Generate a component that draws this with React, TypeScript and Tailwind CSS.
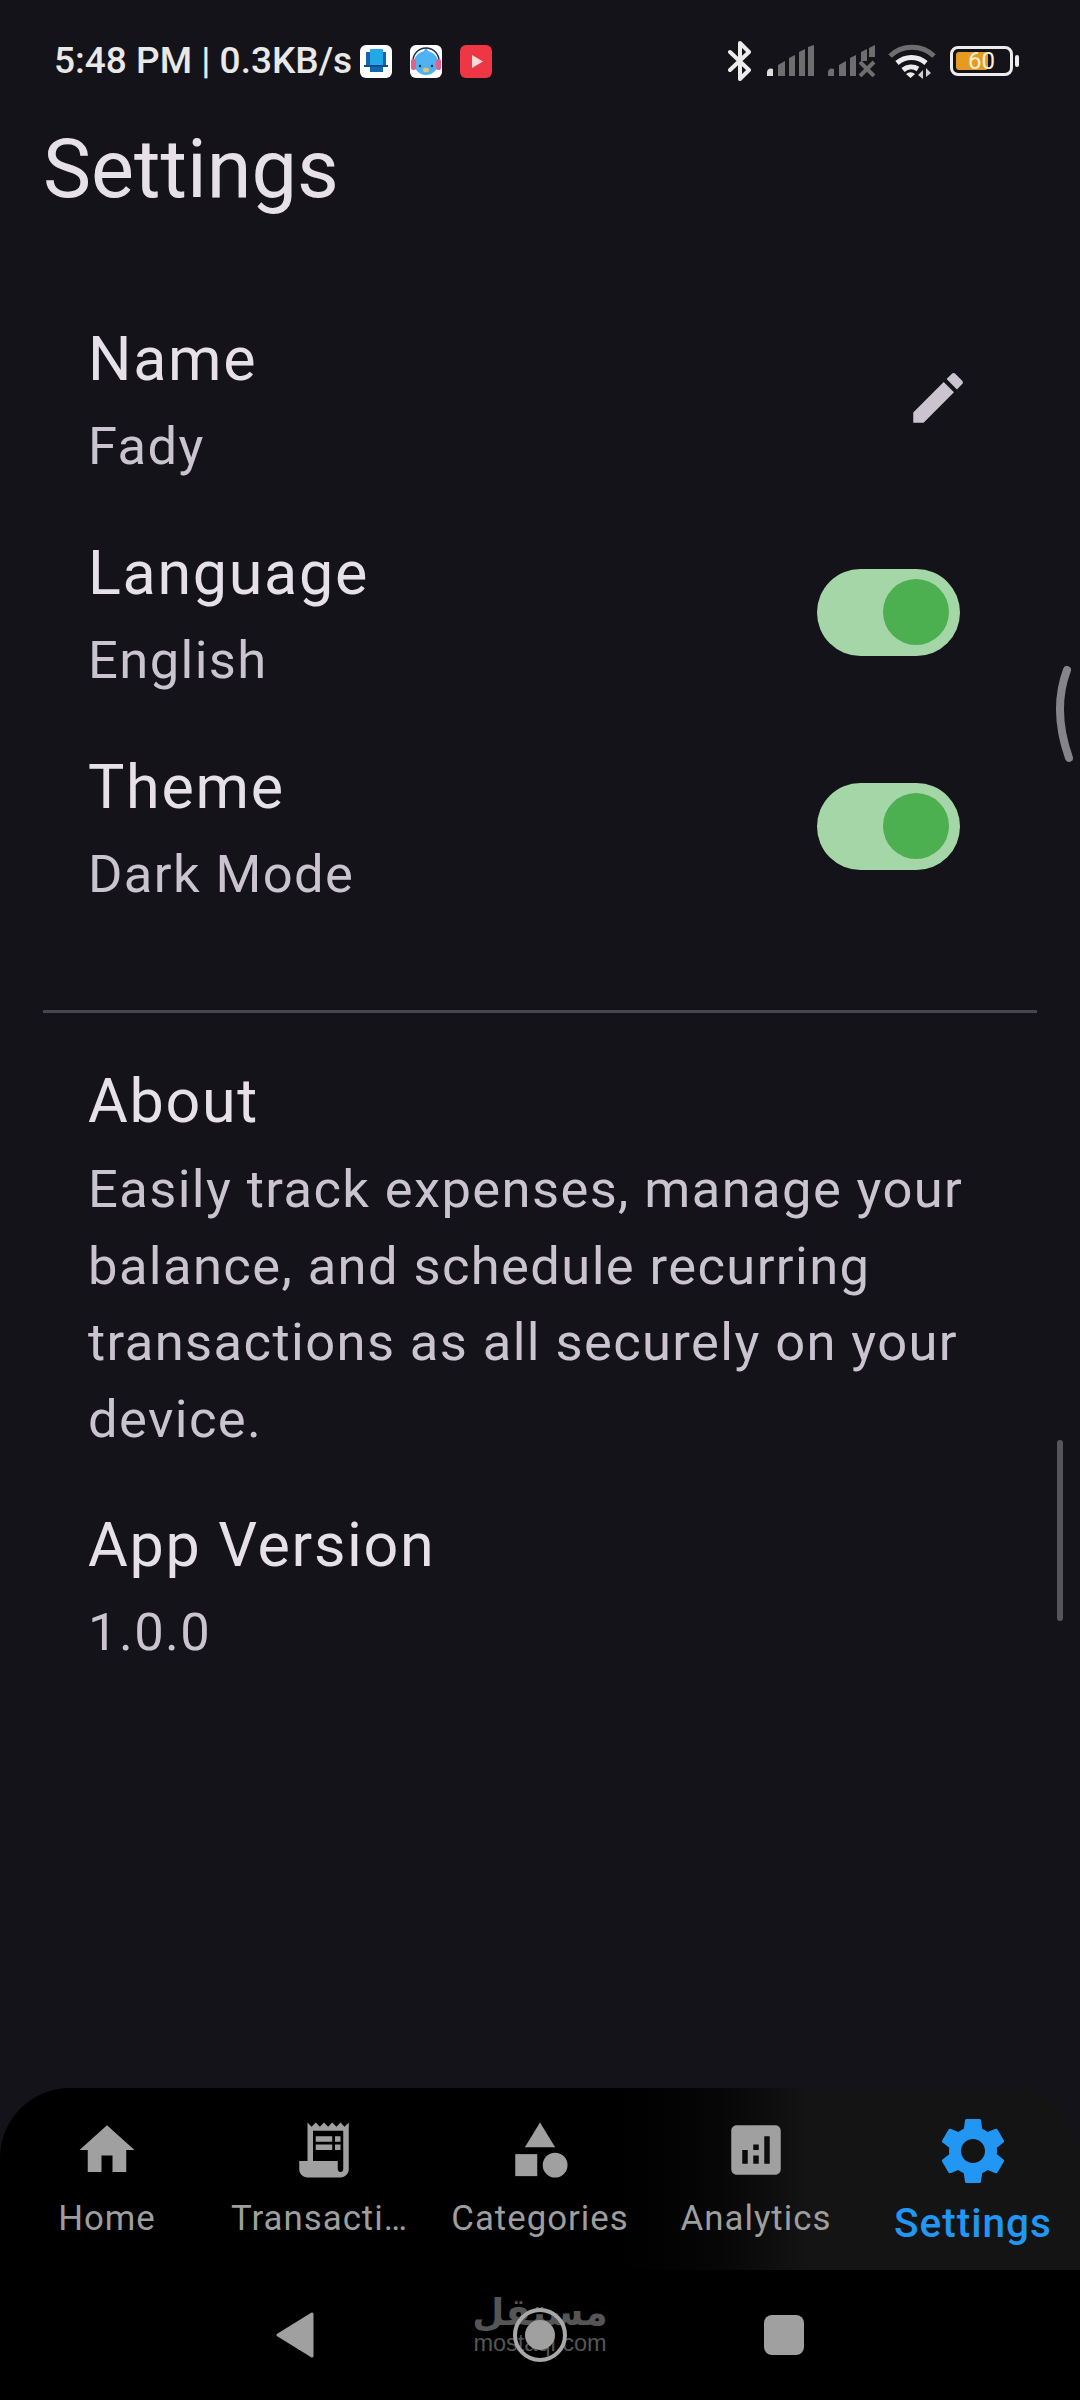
import { MdAnalytics, MdCategory, MdEdit, MdHome, MdReceiptLong, MdSettings } from "react-icons/md";

const roboto = "font-['Roboto',sans-serif]";

function AppIcons() {
  return (
    <div className="flex items-center gap-[18px] ml-[8px]">
      <svg width="32" height="33" viewBox="0 0 32 33">
        <rect width="32" height="33" rx="6" fill="#ffffff" />
        <rect x="6" y="7" width="20" height="14" fill="#1565a8" />
        <rect x="10" y="4" width="13" height="17" rx="1" fill="#23a7e6" />
        <rect x="4" y="20" width="24" height="2" fill="#0d4f8c" />
        <rect x="10" y="22" width="13" height="5" fill="#1368a9" />
      </svg>
      <svg width="32" height="33" viewBox="0 0 32 33">
        <rect width="32" height="33" rx="6" fill="#ffffff" />
        <circle cx="16" cy="18" r="12" fill="#4fb3f2" />
        <path d="M16 2l-3 6h6z" fill="#4fb3f2" />
        <path d="M3 16a13 13 0 0 1 26 0" fill="none" stroke="#22304f" strokeWidth="1.500" />
        <rect x="1" y="14" width="5" height="11" rx="2" fill="#e0608f" />
        <rect x="26" y="14" width="5" height="11" rx="2" fill="#e0608f" />
        <circle cx="10" cy="21" r="1.200" fill="#1c2b45" />
        <circle cx="22" cy="21" r="1.200" fill="#1c2b45" />
        <ellipse cx="16" cy="25" rx="3" ry="2.200" fill="#e2c85c" />
      </svg>
      <svg width="32" height="33" viewBox="0 0 32 33">
        <rect width="32" height="33" rx="6" fill="#ee3644" />
        <path d="M12 10l11 6.500-11 6.500z" fill="#fbd9d6" />
      </svg>
    </div>
  );
}

function SignalBars({ crossed }: { crossed?: boolean }) {
  return (
    <svg width="49" height="32" viewBox="0 0 49 32">
      <path d="M1 31v-4a4 4 0 0 1 6-3v7z" fill={crossed ? "#6e6e6e" : "#dcdcdc"} />
      <path d="M12 31V20l7-4v15z" fill="#6e6e6e" />
      <path d="M23 31V13l6-3v21z" fill="#6e6e6e" />
      {crossed ? (
        <>
          <path d="M34 16V7l6-3v12z" fill="#6e6e6e" />
          <path d="M42 12V3l6-3v12z" fill="#6e6e6e" />
          <path d="M33 17l14 14M47 17L33 31" stroke="#6e6e6e" strokeWidth="4" />
        </>
      ) : (
        <>
          <path d="M33 31V7l6-3v27z" fill="#6e6e6e" />
          <path d="M42 31V2l6-2v31z" fill="#6e6e6e" />
        </>
      )}
    </svg>
  );
}

function StatusIcons() {
  return (
    <div className="flex items-center">
      <svg width="24" height="40" viewBox="0 0 24 40" className="mr-[14px]">
        <path d="M2 11l19 18-9 9V2l9 9L2 29" fill="none" stroke="#ececec" strokeWidth="4" strokeLinejoin="round" strokeLinecap="round" />
      </svg>
      <SignalBars />
      <div className="w-[12px]" />
      <SignalBars crossed />
      <div className="w-[12px]" />
      <svg width="48" height="36" viewBox="0 0 48 36">
        <path d="M2 13a32 32 0 0 1 44 0" fill="none" stroke="#6e6e6e" strokeWidth="5" />
        <path d="M9 20a22 22 0 0 1 29 0" fill="none" stroke="#ececec" strokeWidth="5" />
        <path d="M15 27a13 13 0 0 1 15-1" fill="none" stroke="#ececec" strokeWidth="5" />
        <path d="M18 31a7 7 0 0 1 9 0l-4.500 4z" fill="#ececec" />
        <path d="M35 27v9l-5-4zM38 25v9l5-4z" fill="#cfcfcf" />
      </svg>
      <div className="relative ml-[14px] w-[63px] h-[30px] rounded-[8px] border-[3px] border-[#ececec]">
        <div className="absolute left-[3px] top-[3px] bottom-[3px] w-[32px] rounded-[3px] bg-[#e59a22]" />
        <span className={`absolute left-[15px] top-0 text-[24px] leading-[24px] text-[#fdf0d8] ${roboto}`}>60</span>
      </div>
      <div className="ml-[2px] w-[4px] h-[12px] rounded-[2px] bg-[#ececec]" />
    </div>
  );
}

function Toggle() {
  return (
    <div className="flex items-center justify-end w-[143px] h-[87px] pr-[11px] rounded-full bg-[#a5d6a7]">
      <div className="w-[66px] h-[66px] rounded-full bg-[#4caf50]" />
    </div>
  );
}

function SettingRow({ title, value, children }: { title: string; value: string; children: React.ReactNode }) {
  return (
    <div className="flex items-center justify-between">
      <div>
        <p className="text-[61px] leading-[72px] tracking-[1.700px] text-[#e6e0e9]">{title}</p>
        <p className="mt-[15px] mb-[1px] text-[52.500px] leading-[72px] tracking-[1.400px] text-[#cac4d0]">{value}</p>
      </div>
      {children}
    </div>
  );
}

const navItems = [
  { label: "Home", icon: MdHome, width: "w-[174px]", iconClass: "", labelClass: "" },
  { label: "Transacti…", icon: MdReceiptLong, width: "w-[244px]", iconClass: "ml-[16px]", labelClass: "ml-[7px]" },
  { label: "Categories", icon: MdCategory, width: "w-[204px]", iconClass: "", labelClass: "" },
  { label: "Analytics", icon: MdAnalytics, width: "w-[228px]", iconClass: "", labelClass: "" },
];

function BottomNav() {
  return (
    <nav className="flex h-[182px] pl-[20px] rounded-t-[70px] bg-gradient-to-r from-black from-[50%] to-[#141414] to-[75%]">
      {navItems.map((item) => (
        <div key={item.label} className={`flex flex-col items-center pt-[29px] ${item.width}`}>
          <item.icon size={66} className={`text-[#a0a0a0] ${item.iconClass}`} />
          <span className={`mt-[13px] text-[34.800px] leading-[44px] tracking-[1px] text-[#9e9e9e] whitespace-nowrap ${item.labelClass}`}>{item.label}</span>
        </div>
      ))}
      <div className="flex flex-col items-center pt-[23px] w-[206px]">
        <MdSettings size={80} className="text-[#2196f3]" />
        <span className="mt-[7px] text-[40.500px] leading-[50px] tracking-[1px] font-medium text-[#2196f3] whitespace-nowrap">Settings</span>
      </div>
    </nav>
  );
}

function SystemNav() {
  return (
    <div className="relative h-[130px] bg-black">
      {/* mostaql watermark */}
      <div className="absolute left-[470px] top-[23px] w-[140px] flex flex-col items-center text-[#555555]">
        <span className="h-[40px] text-[37px] leading-[40px] font-bold font-['DejaVu_Sans',sans-serif]" dir="rtl">مستقل</span>
        <span className="h-[24px] -mt-[2px] text-[23.500px] leading-[24px] font-['Liberation_Sans',sans-serif]">mostaql.com</span>
      </div>
      <div className="relative flex items-center h-full pl-[276px]">
        <svg width="38" height="46" viewBox="0 0 38 46">
          <path d="M36 2v42L2 23z" fill="#a0a0a0" stroke="#a0a0a0" strokeWidth="3" strokeLinejoin="round" />
        </svg>
        <div className="ml-[199px] flex items-center justify-center w-[54px] h-[54px] rounded-full border-[4px] border-[#a8a8a8]">
          <div className="w-[30px] h-[30px] rounded-full bg-[#a0a0a0]" />
        </div>
        <div className="ml-[197px] w-[40px] h-[40px] rounded-[8px] bg-[#a0a0a0]" />
      </div>
    </div>
  );
}

export default function App() {
  return (
    <div className={`relative flex flex-col w-[1080px] h-[2400px] overflow-hidden bg-[#141319] ${roboto}`}>
      <header className="flex items-center justify-between h-[120px] pt-[2px] pl-[54px] pr-[61px]">
        <div className="flex items-center">
          <span className="text-[37px] font-medium text-[#e8e8e8] whitespace-nowrap">5:48 PM | 0.3KB/s</span>
          <AppIcons />
        </div>
        <StatusIcons />
      </header>

      <main className="flex-1">
        <h1 className="pl-[43px] text-[81px] leading-[100px] text-[#e6e0e9]">Settings</h1>

        <section className="mt-[103px] flex flex-col gap-[54px] pl-[88px]">
          <SettingRow title="Name" value="Fady">
            <div className="pr-[109px] pb-[10px]">
              <MdEdit size={66} className="text-[#cac4d0]" />
            </div>
          </SettingRow>
          <SettingRow title="Language" value="English">
            <div className="pr-[120px] pb-[10px]"><Toggle /></div>
          </SettingRow>
          <SettingRow title="Theme" value="Dark Mode">
            <div className="pr-[120px] pb-[10px]"><Toggle /></div>
          </SettingRow>
        </section>

        <div className="mt-[99px] mx-[43px] h-[3px] bg-[#49454f]" />

        <section className="pl-[88px] pr-[100px]">
          <p className="mt-[52px] text-[61px] leading-[72px] tracking-[1.700px] text-[#e6e0e9]">About</p>
          <p className="mt-[14px] mb-[1px] text-[52.500px] leading-[76.500px] tracking-[1.400px] text-[#cac4d0]">
            Easily track expenses, manage your balance, and schedule recurring transactions as all securely on your device.
          </p>
          <p className="mt-[52px] text-[61px] leading-[72px] tracking-[1.700px] text-[#e6e0e9]">App Version</p>
          <p className="mt-[15px] text-[52.500px] leading-[72px] tracking-[1.400px] text-[#cac4d0]">1.0.0</p>
        </section>
      </main>

      <BottomNav />
      <SystemNav />

      {/* scrollbar and edge handle float over the page */}
      <div className="absolute left-[1057px] top-[1440px] w-[6px] h-[181px] rounded-full bg-[#56555a]" />
      <svg className="absolute left-[1050px] top-[660px]" width="30" height="104" viewBox="0 0 30 104">
        <path d="M17 10Q2 50 19 98" fill="none" stroke="#85848a" strokeWidth="8" strokeLinecap="round" />
      </svg>
    </div>
  );
}
